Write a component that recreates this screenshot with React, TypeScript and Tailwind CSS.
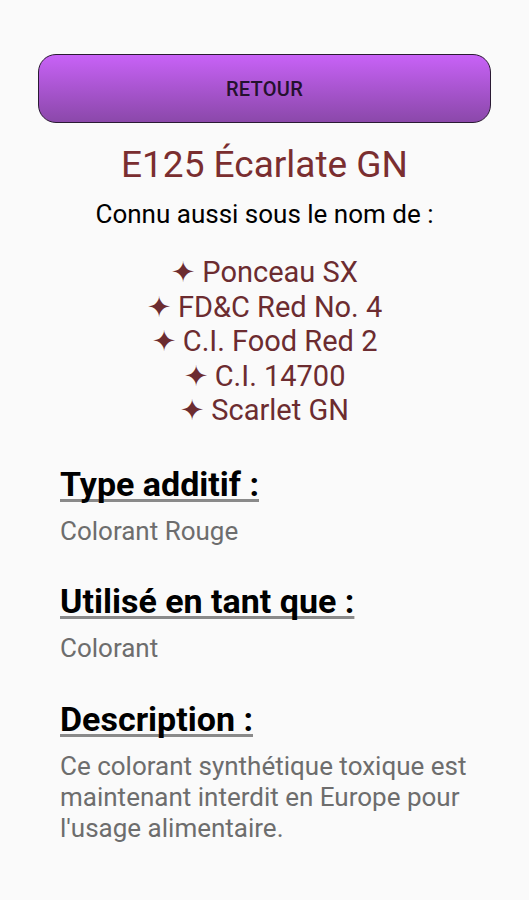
const aliases = ['Ponceau SX', 'FD&C Red No. 4', 'C.I. Food Red 2', 'C.I. 14700', 'Scarlet GN']

function Section({ title, children, className = '' }: { title: string; children: React.ReactNode; className?: string }) {
  return (
    <div className={'pl-[60px] pr-[48px] ' + className}>
      <h2 className="text-[34px] leading-[40px] font-bold text-black underline decoration-[#8a8a8a] decoration-[2.5px] underline-offset-[3px] [text-decoration-skip-ink:none]">
        {title}
      </h2>
      <p className="mt-[12px] text-[26px] leading-[31px] text-[#6d6d6d]">{children}</p>
    </div>
  )
}

export default function App() {
  return (
    <div className="min-h-screen bg-[#fafafa] font-['Roboto',sans-serif]">
      <div className="pt-[54px] px-[38px]">
        <button className="w-full h-[69px] rounded-[18px] border border-[#2a1a33] bg-gradient-to-b from-[#c862f7] to-[#8b48aa] text-[20px] font-medium text-[#24112e] tracking-[0.3px]">
          RETOUR
        </button>
      </div>

      <h1 className="mt-[21px] text-center text-[37px] leading-[42px] text-[#7a2e30]">E125 Écarlate GN</h1>
      <p className="mt-[12px] text-center text-[26px] leading-[32px] text-black">Connu aussi sous le nom de :</p>

      <ul className="mt-[25px] text-center text-[29px] leading-[34.5px] text-[#6c2c30]">
        {aliases.map((a) => (
          <li key={a}>✦ {a}</li>
        ))}
      </ul>

      <Section title="Type additif :" className="mt-[36px]">Colorant Rouge</Section>
      <Section title="Utilisé en tant que :" className="mt-[34px]">Colorant</Section>
      <Section title="Description :" className="mt-[35px]">
        Ce colorant synthétique toxique est maintenant interdit en Europe pour l'usage alimentaire.
      </Section>
    </div>
  )
}
